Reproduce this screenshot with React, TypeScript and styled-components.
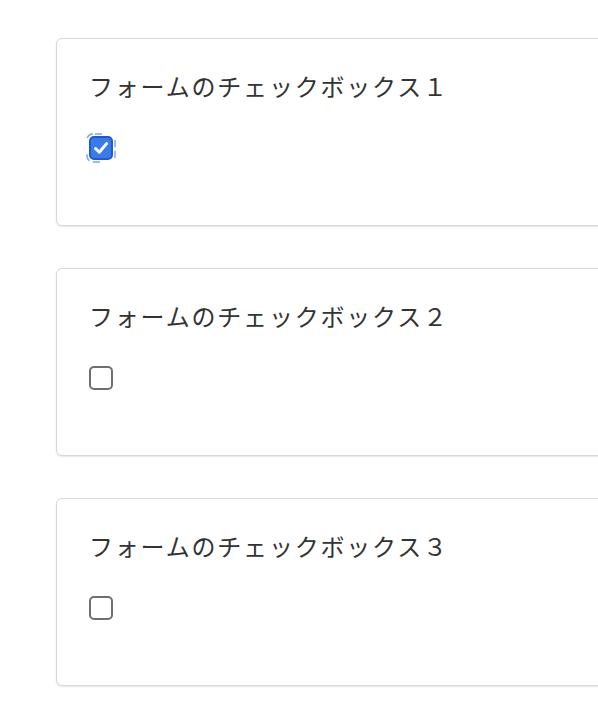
import * as React from 'react';
import styled, { createGlobalStyle } from 'styled-components';

const GlobalStyle = createGlobalStyle`
  html, body {
    margin: 0;
    padding: 0;
    background: #fff;
    overflow-x: hidden;
  }
  body {
    font-family: 'Noto Sans CJK JP', 'Noto Sans', sans-serif;
    color: #333;
  }
`;

const Page = styled.div`
  display: flex;
  flex-direction: column;
  gap: 42px;
  padding: 38px 0 40px 56px;
`;

const Card = styled.section`
  box-sizing: border-box;
  width: 620px;
  height: 188px;
  padding: 29px 32px 0;
  border: 1.5px solid #d8d8d8;
  border-radius: 6px;
  background: #fff;
  box-shadow: 0 1px 2px rgba(0, 0, 0, 0.1);
`;

const Title = styled.h2`
  margin: 0;
  font-size: 24px;
  line-height: 36px;
  font-weight: 400;
  letter-spacing: 1.8px;
  color: #333;
`;

const CheckRow = styled.label`
  display: flex;
  margin-top: 32px;
`;

const BoxWrap = styled.span`
  position: relative;
  display: inline-flex;
  width: 24px;
  height: 24px;
`;

const Box = styled.input`
  appearance: none;
  box-sizing: border-box;
  margin: 0;
  width: 24px;
  height: 24px;
  border: 2px solid #6f6f6f;
  border-radius: 5px;
  background: #fff;
  cursor: pointer;
  outline: none;
  &:checked {
    border-color: #2459c6;
    background: #3a7bea;
  }
`;

const Tick = styled.svg`
  position: absolute;
  left: 0;
  top: 0;
  pointer-events: none;
`;

const FocusRing = styled.svg`
  position: absolute;
  left: -3px;
  top: -3px;
  pointer-events: none;
`;

type CheckProps = {
  label: string;
  defaultChecked?: boolean;
  focused?: boolean;
};

const CheckCard: React.FC<CheckProps> = ({ label, defaultChecked, focused }) => {
  const [checked, setChecked] = React.useState(!!defaultChecked);
  return (
    <Card>
      <Title>{label}</Title>
      <CheckRow>
        <BoxWrap>
          <Box
            type="checkbox"
            checked={checked}
            onChange={e => setChecked(e.currentTarget.checked)}
          />
          {checked && (
            <Tick width="24" height="24" viewBox="0 0 24 24">
              <path
                d="M6.5 12.5 L10.3 16.2 L17.6 7.6"
                fill="none"
                stroke="#fff"
                strokeWidth="3"
                strokeLinecap="round"
                strokeLinejoin="round"
              />
            </Tick>
          )}
          {focused && (
            <FocusRing width="30" height="30" viewBox="0 0 30 30">
              <rect
                x="1"
                y="1"
                width="28"
                height="28"
                rx="6"
                fill="none"
                stroke="#7aa7f2"
                strokeWidth="1.5"
                strokeDasharray="0 2 8 18 8 2"
                pathLength="112"
              />
            </FocusRing>
          )}
        </BoxWrap>
      </CheckRow>
    </Card>
  );
};

const App: React.FC = () => (
  <>
    <GlobalStyle />
    <Page>
      <CheckCard label="フォームのチェックボックス１" defaultChecked focused />
      <CheckCard label="フォームのチェックボックス２" />
      <CheckCard label="フォームのチェックボックス３" />
    </Page>
  </>
);

export default App;
